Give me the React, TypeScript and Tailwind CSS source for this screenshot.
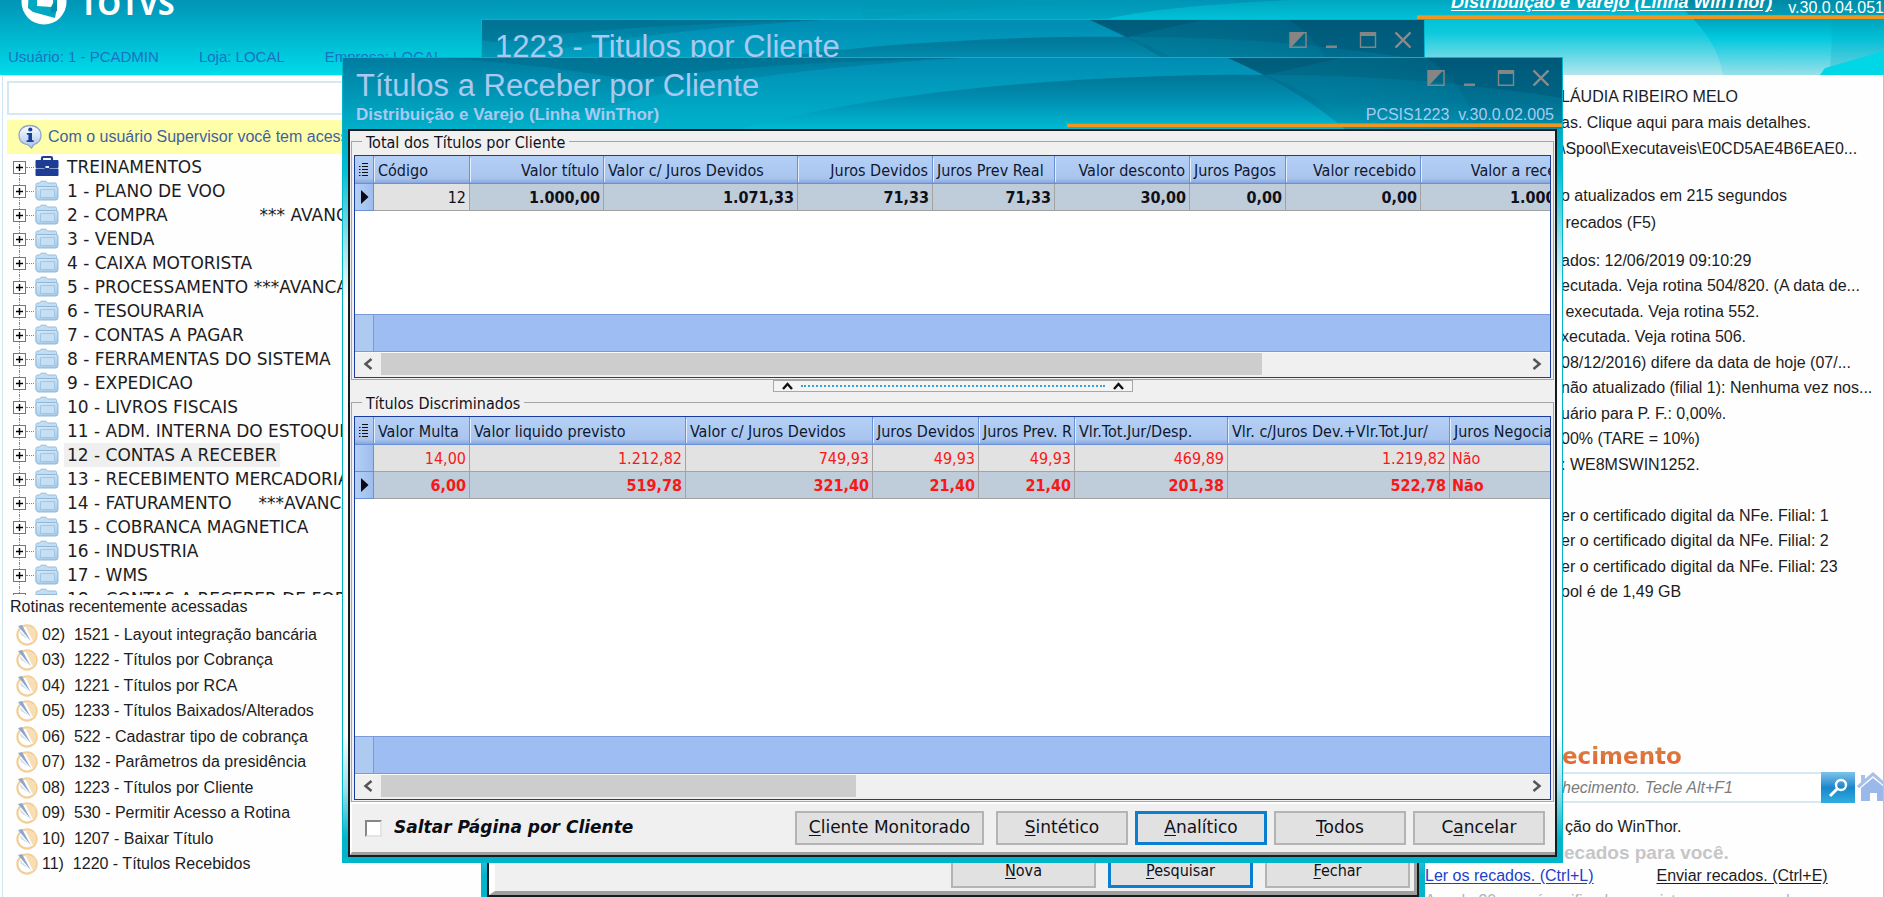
import React from 'react';

const TAHOMA = "font-['DejaVu_Sans_Condensed','DejaVu_Sans',sans-serif]";
const VERDANA = "font-['DejaVu_Sans',Verdana,sans-serif]";
const ARIAL = "font-['Liberation_Sans',Arial,sans-serif]";

/* ---------- icons ---------- */

function TotvsMark() {
  return (
    <svg width="46" height="50" viewBox="0 0 46 50" aria-hidden="true">
      <circle cx="23" cy="25" r="22.5" fill="#fff" />
      <path d="M8 8h28v22l-2 11-22-6-5-4z" fill="#00a8c2" />
      <path d="M16 8h16v18l-2 4-14-1z" fill="#fff" />
      <path d="M30 31l6-9v12l-7 3z" fill="#0090ac" />
    </svg>
  );
}

function InfoIcon() {
  return (
    <svg width="26" height="26" viewBox="0 0 26 26" aria-hidden="true">
      <defs>
        <linearGradient id="info" x1="0" y1="0" x2="0" y2="1">
          <stop offset="0" stopColor="#fff" />
          <stop offset="1" stopColor="#a9c3ea" />
        </linearGradient>
      </defs>
      <path d="M13 1.500c6.500 0 11 4 11 9.700 0 5-3 8-7 9.300l-2.500 3.500-3.500-3.200C5.500 20 2 16.500 2 11.200 2 5.500 6.500 1.500 13 1.500z" fill="url(#info)" stroke="#8ea6cf" strokeWidth="1.300" />
      <circle cx="13.300" cy="5.500" r="2.100" fill="#153fa0" />
      <path d="M9.800 9h5.200v7.200h1.700V18H9.600v-1.800h1.800v-5.400H9.800z" fill="#153fa0" />
    </svg>
  );
}

function Briefcase() {
  return (
    <svg width="24" height="24" viewBox="0 0 24 24" aria-hidden="true">
      <path d="M7 6V3.200Q7 2 8.200 2h7.600Q17 2 17 3.200V6" fill="none" stroke="#1c3c96" strokeWidth="2.200" />
      <rect x="0.500" y="5" width="23" height="8" rx="1" fill="#1c3c96" />
      <rect x="0.500" y="13.500" width="23" height="7.500" rx="1" fill="#1c3c96" />
      <rect x="9.500" y="10.500" width="5" height="4" fill="#1c3c96" />
      <rect x="10.500" y="11" width="3.500" height="2" fill="#e8eefc" />
    </svg>
  );
}

function Folder() {
  return (
    <svg width="24" height="22" viewBox="0 0 24 22" aria-hidden="true">
      <defs>
        <linearGradient id="fold" x1="0" y1="0" x2="0.400" y2="1">
          <stop offset="0" stopColor="#d9ebf8" />
          <stop offset="1" stopColor="#a9cce9" />
        </linearGradient>
      </defs>
      <path d="M1 18V4.500Q1 3 2.500 3h2L6 1.200h5L12.500 3H20q1.500 0 1.500 1.500V18z" fill="#c4ddf1" stroke="#98bedf" />
      <path d="M3 20q-2-1-2-3V8q0-1.500 1.500-1.500h18Q23 6.500 23 8v9.500q0 2.500-2.500 2.500z" fill="url(#fold)" stroke="#8db8dc" />
      <path d="M5.500 9.500h14v8h-14z" fill="#c6dff2" stroke="#9fc6e6" />
    </svg>
  );
}

function RoutineIcon() {
  return (
    <svg width="22" height="22" viewBox="0 0 22 22" aria-hidden="true">
      <circle cx="11" cy="11" r="9.600" fill="#fff" stroke="#f3cf98" strokeWidth="2.200" />
      <path d="M9 1.500L19.500 5v10L17 17.500z" fill="#f8deb4" />
      <path d="M12 11l5 7-4.500-1z" fill="#fff" />
      <path d="M2 2l4-1 9 16.500z" fill="#8fa6cc" />
      <path d="M3 6l9.500 9.500L5 11z" fill="#d4dcea" />
    </svg>
  );
}

function WindowButtons() {
  return (
    <div className="flex gap-[11px]">
      <button type="button" aria-label="Tema" className="flex h-6 w-6 items-center justify-center">
        <svg width="18" height="16" viewBox="0 0 18 16"><path d="M1 0.700h16v14.600H1z" fill="none" stroke="#858585" strokeWidth="1.500" /><path d="M1 0h15.500L2 15.500H1z" fill="#858585" /></svg>
      </button>
      <button type="button" aria-label="Minimizar" className="flex h-6 w-6 items-center justify-center">
        <svg width="18" height="16" viewBox="0 0 18 16"><path d="M2 13.500h11v2.500H2z" fill="#858585" /></svg>
      </button>
      <button type="button" aria-label="Maximizar" className="flex h-6 w-6 items-center justify-center">
        <svg width="18" height="16" viewBox="0 0 18 16"><path d="M1.500 0.700h15v14.600h-15z" fill="none" stroke="#858585" strokeWidth="1.400" /><path d="M1 0h16v4H1z" fill="#858585" /></svg>
      </button>
      <button type="button" aria-label="Fechar janela" className="flex h-6 w-6 items-center justify-center">
        <svg width="18" height="16" viewBox="0 0 18 16"><path d="M1.500 0.500l15 15M16.500 0.500l-15 15" stroke="#8c8c8c" strokeWidth="2.400" /></svg>
      </button>
    </div>
  );
}

/* Decorative waves of a window title bar, anchored to its right end. */
function TitleWaves({ id }: { id: string }) {
  return (
    <svg className="absolute top-0 right-0" width="1221" height="72" viewBox="0 0 1221 72" aria-hidden="true">
      <defs>
        <linearGradient id={id + 'a'} x1="0" y1="0" x2="0" y2="1">
          <stop offset="0" stopColor="#008fb6" />
          <stop offset="1" stopColor="#00b4ce" />
        </linearGradient>
        <linearGradient id={id + 'b'} x1="0" y1="0" x2="0" y2="1">
          <stop offset="0" stopColor="#007597" />
          <stop offset="0.500" stopColor="#0092b4" />
          <stop offset="1" stopColor="#00bcd4" />
        </linearGradient>
        <linearGradient id={id + 'c'} x1="0" y1="0" x2="0" y2="1">
          <stop offset="0" stopColor="#006484" />
          <stop offset="0.600" stopColor="#007c9c" />
          <stop offset="1" stopColor="#00a2bc" />
        </linearGradient>
        <linearGradient id={id + 'd'} x1="0" y1="0" x2="1" y2="0">
          <stop offset="0" stopColor="#00b0cc" stopOpacity="0.300" />
          <stop offset="1" stopColor="#00648a" stopOpacity="0.550" />
        </linearGradient>
      </defs>
      <path d="M180 72C320 30 430 12 620 0H1221V72z" fill={`url(#${id}a)`} opacity="0.850" />
      <path d="M100 0H620C470 4 380 10 290 22Q200 6 100 0z" fill="#006888" opacity="0.450" />
      <path d="M395 72C500 44 640 22 860 17Q1040 15 1221 32V72z" fill={`url(#${id}b)`} />
      <path d="M887 0C925 17 965 38 1005 72H1221V0z" fill={`url(#${id}c)`} />
      <path d="M887 0C905 8 915 12 924 17Q1070 16 1221 40V0z" fill="#004e6a" opacity="0.350" />
      <path d="M1086 0Q1124 24 1136 72H1010C985 45 960 30 924 17L1000 0z" fill={`url(#${id}d)`} opacity="0.450" />
      <path d="M1086 0Q1124 24 1136 72H1221V0z" fill="#004f70" opacity="0.220" />
      <rect x="726" y="65" width="495" height="1" fill="#a8884c" />
      <rect x="726" y="66" width="495" height="3" fill="#f0961e" />
    </svg>
  );
}

function HeaderWaves() {
  return (
    <svg className="absolute top-0 right-0" width="1221" height="75" viewBox="0 0 1221 75" aria-hidden="true">
      <defs>
        <linearGradient id="hl" x1="0" y1="0" x2="0" y2="1">
          <stop offset="0" stopColor="#00a6c0" />
          <stop offset="0.250" stopColor="#00c2d8" />
          <stop offset="0.450" stopColor="#10cade" />
          <stop offset="1" stopColor="#b2e6ec" />
        </linearGradient>
        <linearGradient id="hr" x1="0" y1="0" x2="0" y2="1">
          <stop offset="0" stopColor="#0088a4" />
          <stop offset="0.240" stopColor="#00a2bc" />
          <stop offset="0.500" stopColor="#00c8de" />
          <stop offset="1" stopColor="#98e0ea" />
        </linearGradient>
      </defs>
      <path d="M200 20Q320 4 520 0H200z" fill="#0098b4" opacity="0.400" />
      <path d="M444 19Q500 6 630 0H1221V75H444z" fill="url(#hl)" />
      <path d="M1010 0Q1054 36 1060 75H1221V0z" fill="url(#hr)" />
      <path d="M1165 0Q1172 30 1166 75H1221V0z" fill="#00a0bc" opacity="0.220" />
      <path d="M1157 75l5-7 59-17V75z" fill="#00d6e6" />
      <rect x="754" y="15" width="467" height="1" fill="#b09a5c" />
      <rect x="754" y="16" width="467" height="3" fill="#f0961e" />
    </svg>
  );
}

/* ---------- data grid ---------- */

type Col = { w: string; title: string; head: string; body: string };
type Row = { active: boolean; cells: string[] };

const R = 'text-right';
const L = 'text-left';

const totalCols: Col[] = [
  { w: 'w-[96px]', title: 'Código', head: L, body: R },
  { w: 'w-[134px]', title: 'Valor título', head: R, body: R },
  { w: 'w-[194px]', title: 'Valor c/ Juros Devidos', head: L, body: R },
  { w: 'w-[135px]', title: 'Juros Devidos', head: R, body: R },
  { w: 'w-[122px]', title: 'Juros Prev Real', head: L, body: R },
  { w: 'w-[135px]', title: 'Valor desconto', head: R, body: R },
  { w: 'w-[96px]', title: 'Juros Pagos', head: L, body: R },
  { w: 'w-[135px]', title: 'Valor recebido', head: R, body: R },
  { w: 'w-[164px]', title: 'Valor a receber', head: R, body: R },
];
const totalRows: Row[] = [
  { active: true, cells: ['12', '1.000,00', '1.071,33', '71,33', '71,33', '30,00', '0,00', '0,00', '1.000,00'] },
];

const detailCols: Col[] = [
  { w: 'w-[96px]', title: 'Valor Multa', head: L, body: R },
  { w: 'w-[216px]', title: 'Valor liquido previsto', head: L, body: R },
  { w: 'w-[187px]', title: 'Valor c/ Juros Devidos', head: L, body: R },
  { w: 'w-[106px]', title: 'Juros Devidos', head: L, body: R },
  { w: 'w-[96px]', title: 'Juros Prev. R', head: L, body: R },
  { w: 'w-[153px]', title: 'Vlr.Tot.Jur/Desp.', head: L, body: R },
  { w: 'w-[222px]', title: 'Vlr. c/Juros Dev.+Vlr.Tot.Jur/', head: L, body: R },
  { w: 'w-[164px]', title: 'Juros Negociados', head: L, body: L },
];
const detailRows: Row[] = [
  { active: false, cells: ['14,00', '1.212,82', '749,93', '49,93', '49,93', '469,89', '1.219,82', 'Não'] },
  { active: true, cells: ['6,00', '519,78', '321,40', '21,40', '21,40', '201,38', '522,78', 'Não'] },
];

function Grid({ cols, rows, tableWidth, red, plainFirst, thumb, className }: {
  cols: Col[]; rows: Row[]; tableWidth: string; red: boolean; plainFirst: boolean; thumb: string; className: string;
}) {
  return (
    <div className={'flex flex-col overflow-hidden border border-[#1a3c9c] bg-white ' + className}>
      <div className="min-h-0 flex-1 overflow-hidden">
        <table className={'table-fixed border-separate border-spacing-0 text-[16px] whitespace-nowrap ' + tableWidth}>
          <thead>
            <tr className="h-[28px] bg-linear-to-b from-[#b4d0f6] via-[#a9c5ee] via-80% to-[#7f9fdc] text-[#101830]">
              <th aria-label="Colunas" className="w-[19px] border-r border-b border-[#6a90d6] p-0">
                <svg className="mx-auto" width="12" height="15" viewBox="0 0 12 15">
                  <path d="M4 1.500h6M4 4.500h6M4 7.500h6M4 10.500h6M4 13.500h6" stroke="#111" strokeWidth="1.200" />
                  <path d="M1 4.500h1.500M1 7.500h1.500M1 10.500h1.500M1 13.500h1.500" stroke="#111" strokeWidth="1.200" />
                </svg>
              </th>
              {cols.map((c, i) => (
                <th key={i} className={'overflow-hidden border-r border-b border-[#6a90d6] p-0 font-normal ' + c.w}>
                  <div className={'overflow-hidden border-l border-[#e4eefc] pt-[2px] pr-1 pl-[3px] leading-[22px] ' + c.head}>{c.title}</div>
                </th>
              ))}
            </tr>
          </thead>
          <tbody>
            {rows.map((r, i) => (
              <tr key={i} className={'h-[27px] leading-6 ' + (red ? 'text-[#f81818] ' : 'text-[#101018] ') + (r.active ? 'bg-[#bfccd9]' : 'bg-[#e2e2e2]')}>
                <td className="border-r border-b border-[#6a90d6] bg-linear-to-r from-[#b4d0f6] to-[#9dbdec] p-0">
                  {r.active && (
                    <svg className="ml-[6px]" width="8" height="14" viewBox="0 0 8 14"><path d="M0 0l7.500 7L0 14z" fill="#0a0a14" /></svg>
                  )}
                </td>
                {r.cells.map((v, j) => {
                  const plain = plainFirst && j === 0;
                  return (
                    <td key={j} className={'overflow-hidden border-r border-b border-[#a3a3a3] pt-[2px] pr-[3px] pb-0 pl-[2px] ' + cols[j].body + (plain ? ' bg-[#e2e2e2]' : r.active ? ' font-bold' : '')}>{v}</td>
                  );
                })}
              </tr>
            ))}
          </tbody>
        </table>
      </div>
      <div className="flex h-[38px] border-y border-[#7a9ad8] bg-[#9dbdf3]">
        <div className="w-[19px] border-r border-[#7a9ad8] bg-[#aecaf1]" />
      </div>
      <div className="flex h-[25px] items-center border-t border-b-2 border-[#f0f0f0] border-t-[#fafafa] bg-[#f0f0f0]">
        <button type="button" aria-label="Rolar para a esquerda" className="flex h-full w-[26px] items-center justify-center">
          <svg width="10" height="12" viewBox="0 0 10 12"><path d="M8.500 1L2.500 6l6 5" fill="none" stroke="#555" strokeWidth="2.500" /></svg>
        </button>
        <div className="flex h-full flex-1">
          <div className={'h-full bg-[#cdcdcd] ' + thumb} />
        </div>
        <button type="button" aria-label="Rolar para a direita" className="flex h-full w-[26px] items-center justify-center">
          <svg width="10" height="12" viewBox="0 0 10 12"><path d="M1.500 1l6 5-6 5" fill="none" stroke="#555" strokeWidth="2.500" /></svg>
        </button>
      </div>
    </div>
  );
}

/* ---------- window chrome ---------- */

const FRAME =
  'absolute flex flex-col border border-[#00b6cc] bg-[linear-gradient(to_bottom,#007ca0_0,#00a8c4_9%,#00c0d6_14%,#a8e6ee_24%,#ffffff_30%,#ffffff_84%,#9ce0ea_91%,#00b4cc_97%)]';

function ClassicButton({ label, hot, primary, className }: { label: string; hot: number; primary?: boolean; className: string }) {
  return (
    <button type="button" className={'h-[34px] bg-[#e1e1e1] text-[#101018] ' + (primary ? 'border-3 border-[#0a7fd0] ' : 'border-2 border-[#b4b4b4] ') + className}>
      {label.slice(0, hot)}
      <span className="underline underline-offset-2">{label[hot]}</span>
      {label.slice(hot + 1)}
    </button>
  );
}

function Group({ title, children, className }: { title: string; children: React.ReactNode; className: string }) {
  return (
    <fieldset className={'mx-px min-w-0 border border-[#a6a6a6] px-[2px] pt-1 pb-px ' + className}>
      <legend className="ml-2 px-1 pt-1 text-[16px] leading-4 text-[#101018]">{title}</legend>
      {children}
    </fieldset>
  );
}

function SearchWindow() {
  return (
    <section className={FRAME + ' top-[19px] left-[481px] h-[884px] w-[944px] ' + TAHOMA}>
      <header className="relative flex h-[71px] shrink-0 justify-between overflow-hidden bg-linear-to-b from-[#007ca0] to-[#00b0ca]">
        <TitleWaves id="w1" />
        <h2 className={'relative pt-[9px] pl-[13px] text-[31px] leading-9 text-[#a9c9f0] ' + ARIAL}>1223 - Titulos por Cliente</h2>
        <div className="relative pt-[8px] pr-[9px]"><WindowButtons /></div>
      </header>
      <div className="mx-[5px] mb-[5px] flex flex-1 flex-col justify-end border-2 border-[#141c20] bg-[#f0f0f0]">
        <div className="flex justify-end gap-3 border-r-3 border-b-4 border-l-[6px] border-[#9f9f9f] border-l-white pr-[4px] pb-[3px] text-[16px]">
          <ClassicButton label="Nova" hot={0} className="w-[145px]" />
          <ClassicButton label="Pesquisar" hot={0} primary className="w-[145px]" />
          <ClassicButton label="Fechar" hot={0} className="w-[145px]" />
        </div>
      </div>
    </section>
  );
}

function Caret() {
  return <svg width="11" height="8" viewBox="0 0 11 8" aria-hidden="true"><path d="M1 7l4.500-5L10 7" fill="none" stroke="#111" strokeWidth="2.400" /></svg>;
}

function ReceivablesWindow() {
  return (
    <section className={FRAME + ' top-[57px] left-[342px] h-[806px] w-[1221px] ' + TAHOMA}>
      <header className={'relative flex h-[71px] shrink-0 justify-between overflow-hidden bg-linear-to-b from-[#007ca0] to-[#00b0ca] text-[#a9c9f0] ' + ARIAL}>
        <TitleWaves id="w2" />
        <div className="relative pt-[10px] pl-[13px]">
          <h1 className="text-[31px] leading-9">Títulos a Receber por Cliente</h1>
          <p className="text-[17px] leading-[22px] font-bold">Distribuição e Varejo (Linha WinThor)</p>
        </div>
        <div className="relative flex flex-col items-end pt-[8px]">
          <div className="pr-[9px]"><WindowButtons /></div>
          <p className="mt-[13px] pr-2 text-[16px] leading-6 whitespace-pre">PCSIS1223  v.30.0.02.005</p>
        </div>
      </header>
      <div className="mx-[5px] mb-[5px] flex min-h-0 flex-1 flex-col border-2 border-[#141c20] bg-[#f0f0f0]">
        <Group title="Total dos Títulos por Cliente" className="">
          <Grid cols={totalCols} rows={totalRows} tableWidth="w-[1230px]" red={false} plainFirst thumb="w-[881px]" className="h-[223px]" />
        </Group>
        <div className="flex h-3 shrink-0 justify-center">
          <div className="flex w-[360px] items-center justify-between gap-2 border border-[#a8a8a8] bg-[#f4f4f4] px-2">
            <Caret />
            <div className="flex-1 border-t-2 border-dotted border-[#3aa0dc]" />
            <Caret />
          </div>
        </div>
        <Group title="Títulos Discriminados" className="flex min-h-0 flex-1 flex-col">
          <Grid cols={detailCols} rows={detailRows} tableWidth="w-[1259px]" red plainFirst={false} thumb="w-[475px]" className="h-[384px]" />
        </Group>
        <div className="flex h-[53px] shrink-0 items-center justify-between border-t-2 border-b-3 border-l-2 border-[#a0a0a0] border-t-white border-l-white pr-[10px] pl-[13px]">
          <label className={'flex items-center gap-3 text-[17px] font-bold text-[#0c0c14] italic ' + VERDANA}>
            <input type="checkbox" className="h-[17px] w-[17px] appearance-none border-2 border-[#e4e4e4] border-t-[#868686] border-l-[#868686] bg-white" />
            Saltar Página por Cliente
          </label>
          <div className={'flex gap-[7px] text-[17px] ' + VERDANA}>
            <ClassicButton label="Cliente Monitorado" hot={0} className="mr-[5px] w-[189px]" />
            <ClassicButton label="Sintético" hot={0} className="w-[132px]" />
            <ClassicButton label="Analítico" hot={0} primary className="w-[132px]" />
            <ClassicButton label="Todos" hot={0} className="w-[132px]" />
            <ClassicButton label="Cancelar" hot={1} className="w-[132px]" />
          </div>
        </div>
      </div>
    </section>
  );
}

/* ---------- main page ---------- */

const tree = [
  'TREINAMENTOS',
  '1 - PLANO DE VOO',
  '2 - COMPRA                 *** AVANCADO',
  '3 - VENDA',
  '4 - CAIXA MOTORISTA',
  '5 - PROCESSAMENTO ***AVANCADO',
  '6 - TESOURARIA',
  '7 - CONTAS A PAGAR',
  '8 - FERRAMENTAS DO SISTEMA',
  '9 - EXPEDICAO',
  '10 - LIVROS FISCAIS',
  '11 - ADM. INTERNA DO ESTOQUE',
  '12 - CONTAS A RECEBER',
  '13 - RECEBIMENTO MERCADORIA',
  '14 - FATURAMENTO     ***AVANCADO',
  '15 - COBRANCA MAGNETICA',
  '16 - INDUSTRIA',
  '17 - WMS',
  '18 - CONTAS A RECEBER DE FORN',
];

const recent = [
  '02)  1521 - Layout integração bancária',
  '03)  1222 - Títulos por Cobrança',
  '04)  1221 - Títulos por RCA',
  '05)  1233 - Títulos Baixados/Alterados',
  '06)  522 - Cadastrar tipo de cobrança',
  '07)  132 - Parâmetros da presidência',
  '08)  1223 - Títulos por Cliente',
  '09)  530 - Permitir Acesso a Rotina',
  '10)  1207 - Baixar Título',
  '11)  1220 - Títulos Recebidos',
];

const notices: { gap: string; rows: string; lines: string[] }[] = [
  { gap: 'mt-[9px]', rows: 'h-[78px]', lines: ['LÁUDIA RIBEIRO MELO', 'as. Clique aqui para mais detalhes.', '\\Spool\\Executaveis\\E0CD5AE4B6EAE0...'] },
  { gap: 'mt-[21px]', rows: 'h-[53px]', lines: ['o atualizados em 215 segundos', ' recados (F5)'] },
  { gap: 'mt-[12px]', rows: 'h-[204px]', lines: [
    'ados: 12/06/2019 09:10:29',
    'ecutada. Veja rotina 504/820. (A data de...',
    ' executada. Veja rotina 552.',
    'xecutada. Veja rotina 506.',
    '08/12/2016) difere da data de hoje (07/...',
    'não atualizado (filial 1): Nenhuma vez nos...',
    'uário para P. F.: 0,00%.',
    '00% (TARE = 10%)',
  ] },
  { gap: 'mt-0', rows: 'h-[26px]', lines: [': WE8MSWIN1252.'] },
  { gap: 'mt-[25px]', rows: 'h-[102px]', lines: [
    'er o certificado digital da NFe. Filial: 1',
    'er o certificado digital da NFe. Filial: 2',
    'er o certificado digital da NFe. Filial: 23',
    'ool é de 1,49 GB',
  ] },
];

function Navigation() {
  return (
    <aside className="ml-[2px] flex w-[480px] shrink-0 flex-col border-t border-l border-[#cfe6f2] bg-[#fefefe] pl-1">
      <input aria-label="Pesquisar rotina" className="mt-[5px] h-[34px] shrink-0 border-2 border-[#d5e8f4] bg-white px-2" />
      <p className={'mt-[5px] flex h-[34px] shrink-0 items-center gap-[5px] bg-[#ffffa9] pl-[10px] text-[16px] whitespace-nowrap text-[#3f62a0] ' + ARIAL}>
        <InfoIcon />
        Com o usuário Supervisor você tem acesso
      </p>
      <ul className={'h-[441px] shrink-0 overflow-hidden pt-px text-[17px] leading-6 text-[#1c1c22] ' + VERDANA}>
        {tree.map((t, i) => (
          <li key={i} className="flex h-6 items-center whitespace-pre">
            <span className="ml-[6px] flex h-6 w-[13px] flex-col items-center">
              <span className={'flex-1 border-l border-dotted ' + (i ? 'border-[#858585]' : 'border-transparent')} />
              <button type="button" aria-label="Expandir" className="flex h-[13px] w-[13px] items-center justify-center border border-[#777] bg-white">
                <svg width="7" height="7" viewBox="0 0 7 7"><path d="M3.500 0v7M0 3.500h7" stroke="#000" strokeWidth="1.400" /></svg>
              </button>
              <span className="flex-1 border-l border-dotted border-[#858585]" />
            </span>
            <span className="mr-px w-[8px] border-t border-dotted border-[#858585]" />
            {i === 0 ? <Briefcase /> : <Folder />}
            <span className={'ml-[5px] px-[3px] ' + (i === 12 ? 'bg-[#efefef]' : '')}>{t}</span>
          </li>
        ))}
      </ul>
      <h3 className={'shrink-0 pl-[3px] text-[16px] leading-6 text-[#1c1c22] ' + ARIAL}>Rotinas recentemente acessadas</h3>
      <ul className={'mt-[3px] grid h-[255px] auto-rows-fr text-[16px] text-[#1c1c22] ' + ARIAL}>
        {recent.map((t) => (
          <li key={t} className="flex items-center gap-1 pl-[9px] whitespace-pre"><RoutineIcon />{t}</li>
        ))}
      </ul>
    </aside>
  );
}

function Messages() {
  return (
    <aside className={'flex w-[459px] flex-col border-r border-[#b8c4c8] bg-[#fefefe] text-[16px] whitespace-pre text-[#1c1c22] ' + ARIAL}>
      <div className="ml-[136px] flex h-[530px] flex-col">
        {notices.map((n, i) => (
          <ul key={i} className={'grid auto-rows-fr ' + n.gap + ' ' + n.rows}>
            {n.lines.map((l) => <li key={l} className="flex items-center">{l}</li>)}
          </ul>
        ))}
      </div>
      <div className="mt-[137px] ml-[137px]">
        <h2 className={'bg-linear-to-b from-[#c89050] to-[#f04a18] bg-clip-text pb-[2px] text-[23px] leading-7 font-bold text-transparent ' + VERDANA}>ecimento</h2>
        <div className="flex">
          <input aria-label="Pesquisar na base de conhecimento" placeholder="hecimento. Tecle Alt+F1" className="h-[31px] min-w-0 flex-1 border-y-2 border-[#d5e8f4] bg-white text-[16px] italic placeholder:text-[#7c7c7c]" />
          <button type="button" aria-label="Pesquisar" className="h-[31px] w-[34px] bg-linear-to-b from-[#7cc4ea] via-[#1a86cc] to-[#30aee0]">
            <svg className="mx-auto" width="24" height="24" viewBox="0 0 24 24"><circle cx="15" cy="9" r="5" fill="none" stroke="#fff" strokeWidth="2.400" /><path d="M11 13l-7 7" stroke="#fff" strokeWidth="3" /></svg>
          </button>
          <button type="button" aria-label="Início" className="ml-[2px] h-[31px] w-[26px] overflow-hidden">
            <svg width="32" height="31" viewBox="0 0 32 31"><path d="M1 15L16 2l15 13" fill="none" stroke="#a9c0ea" strokeWidth="3" /><path d="M4 16L16 6l12 10v13h-8v-8h-7v8H4z" fill="#9bb8ea" /><path d="M4 3h4v6l-4 3z" fill="#a9c0ea" /></svg>
          </button>
        </div>
        <p className="mt-[12px] ml-[3px] leading-6">ção do WinThor.</p>
        <p className="ml-[2px] text-[19px] leading-7 font-bold text-[#c6c6c6]">ecados para você.</p>
      </div>
      <div className="flex gap-[63px] leading-[18px]">
        <a href="#ler" className="text-[#1c40c8] underline underline-offset-2">Ler os recados. (Ctrl+L)</a>
        <a href="#enviar" className="underline underline-offset-2">Enviar recados. (Ctrl+E)</a>
      </div>
      <p className="mt-[4px] text-[#b4b4b4]">A cada 30 seg. é verificado se existem novos recados.</p>
    </aside>
  );
}

export default function App() {
  return (
    <div className="relative flex h-screen w-full flex-col overflow-hidden bg-[#fefefe]">
      <header className={'relative flex h-[75px] shrink-0 justify-between overflow-hidden bg-linear-to-b from-[#0094b6] to-[#00dcea] ' + ARIAL}>
        <HeaderWaves />
        <div className="relative">
          <div className="-mt-[23px] flex items-center gap-[13px] pl-[21px]">
            <TotvsMark />
            <span className="pt-1 font-['Open_Sans',sans-serif] text-[30px] leading-[46px] font-bold text-white">TOTVS</span>
          </div>
          <p className="mt-[18px] flex gap-10 pl-2 text-[15px] leading-6 whitespace-nowrap text-[#1a72c4]">
            <span>Usuário: 1 - PCADMIN</span>
            <span>Loja: LOCAL</span>
            <span>Empresa: LOCAL</span>
          </p>
        </div>
        <p className="relative -mt-[10px] flex gap-4 text-white">
          <a href="#linha" className="text-[18px] leading-6 font-bold italic underline underline-offset-2">Distribuição e Varejo (Linha WinThor)</a>
          <span className="pt-1 text-[16px] leading-7">v.30.0.04.051</span>
        </p>
      </header>
      <main className="flex min-h-0 flex-1 justify-between overflow-hidden">
        <Navigation />
        <Messages />
      </main>
      <SearchWindow />
      <ReceivablesWindow />
    </div>
  );
}
